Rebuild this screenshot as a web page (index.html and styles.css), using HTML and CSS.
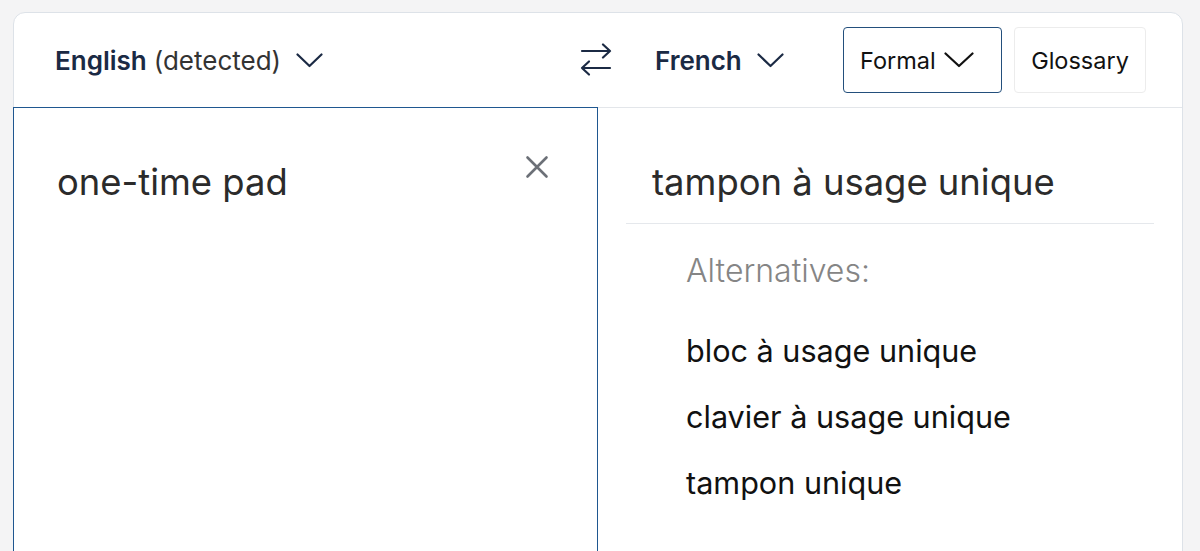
FILE: index.html
```html
<!DOCTYPE html>
<html lang="en">
<head>
<meta charset="utf-8">
<title>Translator</title>
<link rel="stylesheet" href="styles.css">
</head>
<body>
<div class="card">
  <div class="header">
    <div class="lang lang-src">
      <span class="lang-name">English</span>
      <span class="lang-note">(detected)</span>
      <svg class="chev" width="27" height="15" viewBox="0 0 27 15"><path d="M1.5 1.5 L13.5 13 L25.5 1.5" fill="none" stroke="#1b2a44" stroke-width="2.2" stroke-linecap="round" stroke-linejoin="round"/></svg>
    </div>
    <div class="swap">
      <svg width="34" height="34" viewBox="0 0 34 34"><g fill="none" stroke="#1b2a44" stroke-width="2.2" stroke-linecap="round" stroke-linejoin="round"><path d="M3 8 H31 M24 1.5 L31 8 L24 14.5"/><path d="M31 25 H3 M10 18.5 L3 25 L10 31.5"/></g></svg>
    </div>
    <div class="lang lang-tgt">
      <span class="lang-name">French</span>
      <svg class="chev" width="27" height="15" viewBox="0 0 27 15"><path d="M1.5 1.5 L13.5 13 L25.5 1.5" fill="none" stroke="#1b2a44" stroke-width="2.2" stroke-linecap="round" stroke-linejoin="round"/></svg>
    </div>
    <div class="tools">
      <button class="btn btn-formal">Formal
        <svg class="chev" width="30" height="16" viewBox="0 0 30 16"><path d="M1.5 1.5 L15 14 L28.5 1.5" fill="none" stroke="#111" stroke-width="2.2" stroke-linecap="round" stroke-linejoin="round"/></svg>
      </button>
      <button class="btn btn-glossary">Glossary</button>
    </div>
  </div>
  <div class="main">
    <div class="source">
      <div class="source-text">one-time pad</div>
      <svg class="clear" width="24" height="24" viewBox="0 0 24 24"><path d="M2.5 2.5 L21.5 21.5 M21.5 2.5 L2.5 21.5" fill="none" stroke="#6c7077" stroke-width="2.6" stroke-linecap="round"/></svg>
    </div>
    <div class="target">
      <div class="translation"><span class="translation-text">tampon à usage unique</span></div>
      <div class="alts">
        <div class="alts-label">Alternatives:</div>
        <ul class="alts-list">
          <li>bloc à usage unique</li>
          <li>clavier à usage unique</li>
          <li>tampon unique</li>
        </ul>
      </div>
    </div>
  </div>
</div>
</body>
</html>
```

FILE: styles.css
```css
html, body {
  margin: 0;
  padding: 0;
}
body {
  background: #f4f4f5;
  padding: 12px 0 0 13px;
  font-family: Inter, "Noto Sans", sans-serif;
  overflow: hidden;
  height: 551px;
  box-sizing: border-box;
}
.card {
  width: 1170px;
  box-sizing: border-box;
  background: #fff;
  border: 1px solid #dde2e8;
  border-radius: 12px;
  height: 620px;
}
.header {
  height: 94px;
  display: flex;
  align-items: center;
  padding-left: 41px;
  padding-right: 36px;
}
.lang {
  display: flex;
  align-items: center;
  color: #1b2a44;
  font-size: 26px;
}
.lang-src {
  width: 521px;
}
.lang-name {
  font-weight: 600;
}
.lang-note {
  margin-left: 7px;
  color: #333;
}
.lang .chev {
  margin-left: 15px;
}
.swap {
  width: 40px;
  display: flex;
  justify-content: center;
  align-items: center;
}
.lang-tgt {
  margin-left: 39px;
}
.tools {
  margin-left: auto;
  display: flex;
  gap: 12px;
}
.btn {
  font-family: Inter, "Noto Sans", sans-serif;
  font-size: 23.5px;
  color: #111;
  background: #fff;
  height: 66px;
  box-sizing: border-box;
  display: flex;
  align-items: center;
  border-radius: 4px;
  cursor: pointer;
}
.btn-formal {
  width: 159px;
  padding: 0 16px;
  border: 1.5px solid #234f7c;
  gap: 8px;
}
.btn-glossary {
  width: 132px;
  justify-content: center;
  border: 1px solid #ececec;
}
.main {
  display: flex;
  height: 520px;
}
.source {
  width: 585px;
  margin-left: -1px;
  box-sizing: border-box;
  border: 1px solid #1f5790;
  border-bottom: none;
  display: flex;
  justify-content: space-between;
  align-items: flex-start;
  padding: 50px 48px 0 43px;
}
.source-text, .translation-text {
  font-size: 36.4px;
  line-height: 48px;
  color: #2b2b2b;
}
.clear {
  margin-top: -3px;
}
.target {
  flex: 1;
  border-top: 1px solid #e3e6ea;
  padding: 0 28px 0 28px;
}
.translation {
  padding: 50px 0 17px 26px;
  border-bottom: 1px solid #e5e8ec;
}
.alts {
  padding: 27px 0 0 60px;
}
.alts-label {
  font-size: 32px;
  font-weight: 300;
  color: #858585;
  line-height: 40px;
}
.alts-list {
  list-style: none;
  margin: 27px 0 0;
  padding: 0;
}
.alts-list li {
  font-size: 30.6px;
  line-height: 66px;
  color: #111;
}
```
